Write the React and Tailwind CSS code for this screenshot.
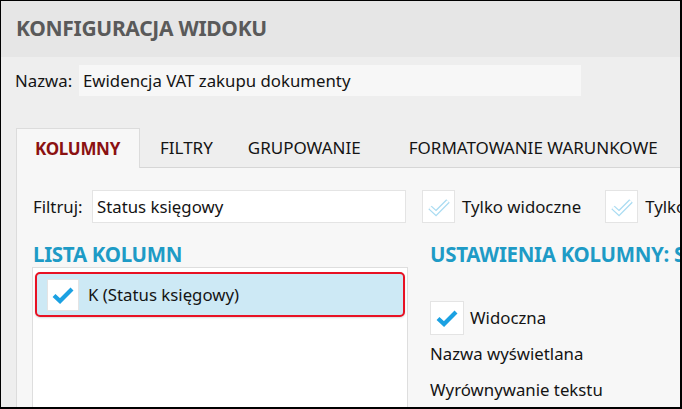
import React from 'react';

const font = { fontFamily: '"Noto Sans", "Open Sans", sans-serif' };

function CheckBox({ checked = true, size = 32 }) {
  return (
    <div
      className="flex items-center justify-center bg-white border border-[#e4e4e4] shrink-0"
      style={{ width: size, height: size }}
    >
      {checked ? (
        <svg width="24" height="24" viewBox="0 0 24 24">
          <path d="M3 12.5 L9 18 L21 6" fill="none" stroke="#1ba1e2" strokeWidth="4.2" strokeLinecap="butt" />
        </svg>
      ) : (
        <svg width="24" height="24" viewBox="0 0 24 24">
          <path d="M3 12.5 L9 18 L21 6" fill="none" stroke="#aadcf2" strokeWidth="5" strokeLinejoin="miter" />
          <path d="M3 12.5 L9 18 L21 6" fill="none" stroke="#ffffff" strokeWidth="2.4" strokeLinejoin="miter" />
        </svg>
      )}
    </div>
  );
}

export default function App() {
  return (
    <div
      className="w-[682px] h-[409px] overflow-hidden bg-[#eeeeee] border-t border-l border-r-2 border-b-2 border-black flex flex-col text-[#141414]"
      style={font}
    >
      {/* Header */}
      <div className="h-[56px] shrink-0 bg-[#e6e6e6] flex items-center pl-[15px]">
        <h1 className="text-[21px] font-bold text-[#5a5a5a] tracking-[-0.3px]">KONFIGURACJA WIDOKU</h1>
      </div>

      {/* Name */}
      <div className="mt-[8px] flex items-center pl-[14px] text-[16.8px]">
        <span className="w-[64px] shrink-0">Nazwa:</span>
        <div className="w-[502px] h-[31px] shrink-0 bg-[#f7f7f7] flex items-center pl-[4px]">
          Ewidencja VAT zakupu dokumenty
        </div>
      </div>

      {/* Tabs */}
      <div className="mt-[33px] ml-[15px] h-[39px] shrink-0 flex items-end border-b border-[#d6d6d6] text-[17px] whitespace-nowrap">
        <div className="w-[124px] h-[40px] -mb-px shrink-0 bg-[#f7f7f7] border border-b-0 border-[#dcdcdc] flex items-center pl-[18px] font-bold text-[#8b1111] tracking-[-0.3px]">
          KOLUMNY
        </div>
        <div className="h-[39px] flex items-center ml-[20px]">FILTRY</div>
        <div className="h-[39px] flex items-center ml-[35px]">GRUPOWANIE</div>
        <div className="h-[39px] flex items-center ml-[48px]">FORMATOWANIE WARUNKOWE</div>
      </div>

      {/* Panel */}
      <div className="flex-1 ml-[15px] bg-[#f7f7f7] border-l border-[#dcdcdc] flex flex-col text-[16.8px] min-w-0">
        <div className="mt-[22px] flex items-center pl-[16px] whitespace-nowrap">
          <span className="w-[59px] shrink-0">Filtruj:</span>
          <div className="w-[314px] h-[33px] shrink-0 bg-white border border-[#e4e4e4] flex items-center pl-[4px]">
            Status księgowy
          </div>
          <div className="ml-[16px] shrink-0">
            <CheckBox checked={false} size={33} />
          </div>
          <span className="ml-[7px] shrink-0">Tylko widoczne</span>
          <div className="ml-[24px] shrink-0">
            <CheckBox checked={false} size={33} />
          </div>
          <span className="ml-[7px] shrink-0">Tylko wybrane</span>
        </div>

        <div className="flex flex-1 mt-[19px] min-h-0">
          {/* Left column */}
          <div className="w-[376px] shrink-0 ml-[15px] flex flex-col">
            <h2 className="h-[24px] flex items-center pl-[1px] text-[20.5px] font-bold text-[#1e9bc6] tracking-[-0.3px]">
              LISTA KOLUMN
            </h2>
            <div className="flex-1 mt-[1px] bg-white border border-b-0 border-[#dedede] pt-[4px] px-[2px]">
              <div className="h-[45px] rounded-[5px] border-2 border-[#e81123] bg-[#cde9f5] flex items-center pl-[10px] shadow-[0_1px_2px_rgba(0,0,0,0.15)]">
                <CheckBox size={32} />
                <span className="ml-[9px]">K (Status księgowy)</span>
              </div>
            </div>
          </div>

          {/* Right column */}
          <div className="ml-[22px] shrink-0 flex flex-col whitespace-nowrap">
            <h2 className="h-[24px] flex items-center text-[20.5px] font-bold text-[#1e9bc6] tracking-[-0.3px]">
              USTAWIENIA KOLUMNY: STATUS KSIĘGOWY
            </h2>
            <div className="mt-[35px] flex items-center">
              <CheckBox size={34} />
              <span className="ml-[6px]">Widoczna</span>
            </div>
            <div className="mt-[6px]">Nazwa wyświetlana</div>
            <div className="mt-[11px]">Wyrównywanie tekstu</div>
          </div>
        </div>
      </div>
    </div>
  );
}
